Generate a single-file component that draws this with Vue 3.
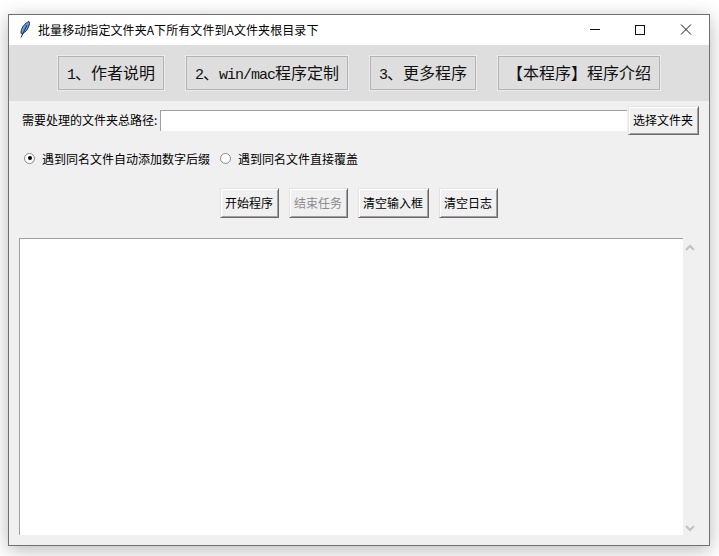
<template>
  <div class="page">
    <div class="window">
      <header class="titlebar">
        <svg class="feather" width="16" height="18" viewBox="0 0 16 18">
          <path d="M11 0.5C7 2 3.5 6.5 3 11C3 12.5 3.3 13 4 13C7.5 11.5 11 7 11.5 2.5C11.6 1.5 11.4 0.8 11 0.5Z" fill="#6b9be0" stroke="#1d2b45" stroke-width="1"/>
          <path d="M9 4L3 16.5" stroke="#1d2b45" stroke-width="1" fill="none"/>
        </svg>
        <span class="title">批量移动指定文件夹A下所有文件到A文件夹根目录下</span>
        <div class="controls">
          <svg width="46" height="30" viewBox="0 0 46 30"><path d="M19 14.5H29" stroke="#111" stroke-width="1"/></svg>
          <svg width="46" height="30" viewBox="0 0 46 30"><rect x="18.5" y="10.5" width="9" height="9" fill="none" stroke="#111" stroke-width="1"/></svg>
          <svg width="46" height="30" viewBox="0 0 46 30"><path d="M18 9.5L28 19.5M28 9.5L18 19.5" stroke="#111" stroke-width="1"/></svg>
        </div>
      </header>

      <nav class="toolbar">
        <button v-for="t in tabs" :key="t.label" class="tab" :class="t.wide ? 'wide' : ''">
          <span v-for="(p, i) in split(t.label)" :key="i" :class="i % 2 ? 'latin' : ''">{{ p }}</span>
        </button>
      </nav>

      <main class="content">
        <div class="path-row">
          <label class="path-label">需要处理的文件夹总路径:</label>
          <div class="path-input"></div>
          <button class="btn select">选择文件夹</button>
        </div>

        <div class="radios">
          <span class="radio"><i class="dot on"></i>遇到同名文件自动添加数字后缀</span>
          <span class="radio"><i class="dot"></i>遇到同名文件直接覆盖</span>
        </div>

        <div class="actions">
          <button class="btn a1">开始程序</button>
          <button class="btn a1 disabled">结束任务</button>
          <button class="btn a2">清空输入框</button>
          <button class="btn a1">清空日志</button>
        </div>

        <div class="log-row">
          <div class="log"></div>
          <div class="scrollbar">
            <svg width="10" height="7" viewBox="0 0 10 7"><path d="M1 6L5 2L9 6" fill="none" stroke="#c2c2c2" stroke-width="2"/></svg>
            <svg width="10" height="7" viewBox="0 0 10 7"><path d="M1 1L5 5L9 1" fill="none" stroke="#c2c2c2" stroke-width="2"/></svg>
          </div>
        </div>
      </main>
    </div>
  </div>
</template>

<script setup>
const tabs = [
  { label: '1、作者说明' },
  { label: '2、win/mac程序定制', wide: true },
  { label: '3、更多程序' },
  { label: '【本程序】程序介绍', wide: true },
]
const split = (s) => s.split(/([a-zA-Z0-9/]+)/)
</script>

<style>
html, body { margin: 0; background: #fff; overflow: hidden; }
</style>

<style scoped>
.page {
  width: 719px;
  height: 556px;
  padding: 14px 0 0 8px;
  box-sizing: border-box;
  font-family: "Noto Sans CJK SC", "Liberation Sans", sans-serif;
  font-size: 12px;
  color: #000;
}
.window {
  width: 702px;
  height: 532px;
  box-sizing: border-box;
  border: 1px solid #707070;
  background: #f0f0f0;
  box-shadow: 0 4px 18px rgba(0, 0, 0, 0.28);
  display: flex;
  flex-direction: column;
}
.titlebar {
  height: 30px;
  flex: none;
  background: #fff;
  display: flex;
  align-items: center;
  padding-left: 9px;
}
.feather { flex: none; margin-right: 4px; }
.title { line-height: 29px; margin-bottom: 1px; letter-spacing: 0.08px; }
.controls { margin-left: auto; display: flex; }
.toolbar {
  height: 56px;
  flex: none;
  background: #dedede;
  box-sizing: border-box;
  padding: 11px 0 0 49px;
  display: flex;
  gap: 22px;
}
.tab {
  width: 106px;
  height: 34px;
  padding: 0 0 2px;
  box-sizing: border-box;
  border: 1px solid #b4b4b4;
  outline: 1px solid #ececec;
  outline-offset: 0;
  background: #dedede;
  font-family: "Noto Sans CJK SC", sans-serif;
  font-size: 16px;
  color: #111;
}
.tab.wide { width: 162px; }
.latin { font-family: "Liberation Mono", monospace; font-size: 15px; letter-spacing: -1px; }
.content { flex: 1; min-height: 0; display: flex; flex-direction: column; }
.path-row {
  display: flex;
  align-items: flex-start;
  height: 34px;
  box-sizing: border-box;
  padding: 5px 0 0 12px;
}
.path-label { line-height: 19px; margin-top: 4px; padding-left: 1px; width: 138px; box-sizing: content-box; flex: none; white-space: nowrap; }
.path-input {
  width: 467px;
  height: 21px;
  margin-top: 4px;
  box-sizing: border-box;
  background: #fff;
  border-top: 1px solid #a0a0a0;
  border-left: 1px solid #a0a0a0;
  flex: none;
}
.btn {
  padding: 0 1px 2px 0;
  box-sizing: border-box;
  background: #f0f0f0;
  border: 1px solid;
  border-color: #e3e3e3 #696969 #696969 #e3e3e3;
  box-shadow: inset 1px 1px 0 #fff, inset -1px -1px 0 #a0a0a0;
  font-family: "Noto Sans CJK SC", sans-serif;
  font-size: 12px;
  color: #000;
  height: 30px;
}
.select { width: 71px; height: 29px; margin-left: 1px; }
.radios { display: flex; margin-top: 13px; padding-left: 15px; height: 20px; align-items: center; }
.radio { display: inline-flex; align-items: center; margin-right: 10px; }
.dot {
  width: 11px;
  height: 11px;
  margin-right: 7px;
  border-radius: 50%;
  box-sizing: border-box;
  border: 1px solid #8a8a8a;
  background: #fff;
  position: relative;
}
.dot.on::after {
  content: "";
  position: absolute;
  left: 2.5px;
  top: 2.5px;
  width: 4px;
  height: 4px;
  border-radius: 50%;
  background: #000;
}
.actions {
  display: flex;
  gap: 10px;
  margin-top: 20px;
  padding-left: 211px;
}
.a1 { width: 59px; }
.a2 { width: 71px; }
.disabled { color: #8c8c8c; }
.log-row { display: flex; flex: 1; min-height: 0; margin-top: 20px; padding-left: 10px; padding-bottom: 10px; }
.log {
  width: 664px;
  box-sizing: border-box;
  background: #fff;
  border-top: 1px solid #a0a0a0;
  border-left: 1px solid #a0a0a0;
}
.scrollbar {
  width: 14px;
  padding: 6px 0 3px;
  box-sizing: border-box;
  display: flex;
  flex-direction: column;
  justify-content: space-between;
  align-items: center;
}
</style>
